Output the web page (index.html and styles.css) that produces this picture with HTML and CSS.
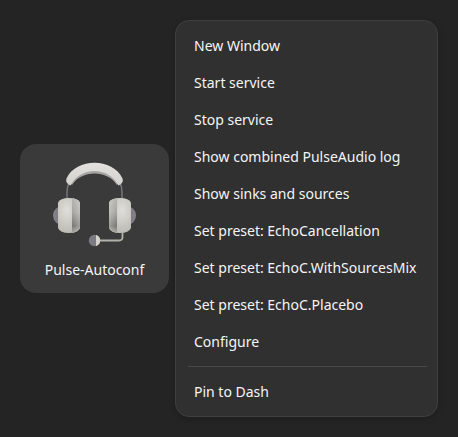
FILE: index.html
```html
<!DOCTYPE html>
<html lang="en">
<head>
    <meta charset="UTF-8">
    <meta name="viewport" content="width=device-width, initial-scale=1.0">
    <title>Pulse-Autoconf</title>
    <link rel="stylesheet" href="styles.css">
</head>
<body>
    <main class="overview">
        <button class="app-tile" type="button">
            <svg class="app-icon" viewBox="1 0 100 100" aria-hidden="true">
                <defs>
                    <linearGradient id="band" x1="0" y1="0" x2="0" y2="1">
                        <stop offset="0" stop-color="#e2e1dd"/>
                        <stop offset="1" stop-color="#d2d1cd"/>
                    </linearGradient>
                    <radialGradient id="shell" cx="0.4" cy="0.35" r="0.7">
                        <stop offset="0" stop-color="#e0dfdb"/>
                        <stop offset="1" stop-color="#b9b8b1"/>
                    </radialGradient>
                    <linearGradient id="pad" x1="0" y1="0" x2="0" y2="1">
                        <stop offset="0" stop-color="#b4b3ae"/>
                        <stop offset="0.4" stop-color="#a5a49f"/>
                        <stop offset="0.8" stop-color="#777672"/>
                        <stop offset="1" stop-color="#aaa9a3"/>
                    </linearGradient>
                    <linearGradient id="padLight" x1="0" y1="0" x2="1" y2="0">
                        <stop offset="0" stop-color="#fff" stop-opacity="0"/>
                        <stop offset="1" stop-color="#fff" stop-opacity="0.3"/>
                    </linearGradient>
                    <linearGradient id="cap" x1="0" y1="0" x2="1" y2="0">
                        <stop offset="0" stop-color="#85848d"/>
                        <stop offset="1" stop-color="#64636b"/>
                    </linearGradient>
                    <clipPath id="cupShape">
                        <path d="M14 47.500 Q16 43 25 43 Q34 43 36 47.500 V73 Q34 78 25 78 Q16 78 14 73 Z"/>
                    </clipPath>
                    <g id="cup">
                        <path d="M23 44 V37 Q23 31 26 26" fill="none" stroke="#77767f" stroke-width="1.500"/>
                        <circle cx="18.500" cy="60.500" r="9.500" fill="url(#cap)"/>
                        <g clip-path="url(#cupShape)">
                            <rect x="14" y="43" width="22" height="35" fill="url(#shell)"/>
                            <rect x="28" y="43" width="8" height="35" fill="url(#pad)"/>
                            <rect x="28" y="43" width="8" height="35" fill="url(#padLight)"/>
                        </g>
                    </g>
                </defs>
                <use href="#cup"/>
                <use href="#cup" transform="translate(101 0) scale(-1 1)"/>
                <path d="M25 26 C34 6 67 6 76 26 L73 30 C64 14.500 37 14.500 28 30 Z" fill="#a5a4a0"/>
                <path d="M22.500 23.500 C32 2.500 69 2.500 78.500 23.500 Q80 28 74.500 30.500 C65 11 36 11 26.500 30.500 Q21 28 22.500 23.500 Z" fill="url(#band)"/>
                <path d="M78.500 77 V82 Q78.500 85.500 75 85.500 H55" fill="none" stroke="#b3b2aa" stroke-width="1.800"/>
                <circle cx="50.500" cy="85.500" r="5.700" fill="#7c7b83"/>
                <path d="M52 80 A5.700 5.700 0 0 1 52 91 Z" fill="#d4d3ca"/>
            </svg>
            <span class="app-name">Pulse-Autoconf</span>
        </button>

        <div class="menu" role="menu">
            <button class="menu-item" type="button" role="menuitem">New Window</button>
            <button class="menu-item" type="button" role="menuitem">Start service</button>
            <button class="menu-item" type="button" role="menuitem">Stop service</button>
            <button class="menu-item" type="button" role="menuitem">Show combined PulseAudio log</button>
            <button class="menu-item" type="button" role="menuitem">Show sinks and sources</button>
            <button class="menu-item" type="button" role="menuitem">Set preset: EchoCancellation</button>
            <button class="menu-item" type="button" role="menuitem">Set preset: EchoC.WithSourcesMix</button>
            <button class="menu-item" type="button" role="menuitem">Set preset: EchoC.Placebo</button>
            <button class="menu-item" type="button" role="menuitem">Configure</button>
            <hr class="menu-separator">
            <button class="menu-item" type="button" role="menuitem">Pin to Dash</button>
        </div>
    </main>
</body>
</html>
```
FILE: styles.css
```css
* {
    box-sizing: border-box;
}
body {
    margin: 0;
    background-color: #242424;
    color: #f5f5f5;
    font-family: "Noto Sans", sans-serif;
    font-size: 14px;
}
button {
    border: none;
    background: none;
    color: inherit;
    font: inherit;
    cursor: pointer;
}
.overview {
    display: flex;
    align-items: center;
    gap: 6px;
    padding: 20px;
}
.app-tile {
    display: flex;
    flex: none;
    flex-direction: column;
    align-items: center;
    width: 149px;
    padding: 11px 8px 8px;
    border-radius: 16px;
    background-color: #3a3a3a;
}
.app-icon {
    width: 100px;
    height: 100px;
}
.app-name {
    line-height: 30px;
    white-space: nowrap;
}
.menu {
    display: flex;
    flex: 1;
    flex-direction: column;
    padding: 6px 0;
    border: 1px solid #3f3f3f;
    border-radius: 14px;
    background-color: #303030;
    box-shadow: 0 2px 6px rgba(0, 0, 0, 0.2);
}
.menu-item {
    padding: 0 18px;
    line-height: 37px;
    text-align: left;
    white-space: nowrap;
}
.menu-item:hover {
    background-color: #3d3d3d;
}
.menu-separator {
    height: 1px;
    margin: 6px 10px 6px 12px;
    border: none;
    background-color: #484848;
}
```
